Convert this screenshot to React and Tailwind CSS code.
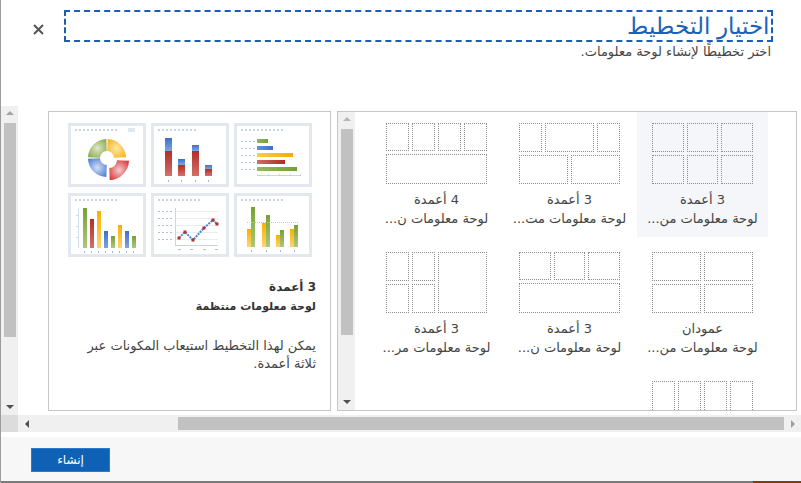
import React from 'react';

// dotted header line that sits on top of every chart thumbnail
const TitleDots = ({ count = 11 }) => (
  <g fill="#c9d5e4">
    {Array.from({ length: count }).map((_, i) => (
      <rect key={i} x={7 + i * 4} y={6} width={2} height={2} />
    ))}
  </g>
);

const Frame = ({ children }) => (
  <svg width="78" height="64" viewBox="0 0 78 64">
    <rect x="1.5" y="1.5" width="75" height="61" fill="#fff" stroke="#e3e8ee" strokeWidth="3" />
    {children}
  </svg>
);

const arc = (cx, cy, R, r, a0, a1) => {
  const p = (rad, a) => [cx + rad * Math.cos((a * Math.PI) / 180), cy + rad * Math.sin((a * Math.PI) / 180)];
  const [x0, y0] = p(R, a0);
  const [x1, y1] = p(R, a1);
  const [x2, y2] = p(r, a1);
  const [x3, y3] = p(r, a0);
  return `M${x0} ${y0} A${R} ${R} 0 0 1 ${x1} ${y1} L${x2} ${y2} A${r} ${r} 0 0 0 ${x3} ${y3} Z`;
};

const Donut = () => (
  <Frame>
    <TitleDots />
    <rect x="60" y="5" width="7" height="4" fill="#e1e7ee" />
    <path d={arc(39, 35, 19, 7, 182, 268)} fill="url(#dG)" />
    <path d={arc(39, 35, 19, 7, 272, 358)} fill="url(#dY)" />
    <path d={arc(39, 35, 19, 7, 92, 178)} fill="url(#dB)" />
    <path d={arc(41, 37, 20, 8, 2, 88)} fill="url(#dR)" />
  </Frame>
);

const Stacked = () => {
  const bars = [
    [14, 15, 28],
    [27, 36, 42],
    [41, 22, 28],
    [54, 42, 46],
  ];
  return (
    <Frame>
      <TitleDots count={10} />
      {bars.map(([x, b, r]) => (
        <g key={x}>
          <rect x={x} y={b} width="7" height={r - b} fill="url(#vB)" />
          <rect x={x} y={r} width="7" height={53 - r} fill="url(#vR)" />
          <rect x={x + 3} y="57" width="1" height="2" fill="#9fb8dc" />
        </g>
      ))}
    </Frame>
  );
};

const HBars = () => {
  const rows = [
    [18, 34, 'url(#hG)'],
    [25, 39, 'url(#hB)'],
    [32, 59, 'url(#hY)'],
    [39, 51, 'url(#hR)'],
    [46, 63, 'url(#hG)'],
  ];
  return (
    <Frame>
      <TitleDots />
      {rows.map(([y, end, fill]) => (
        <g key={y}>
          {[7, 11, 15, 19].map((x) => (
            <rect key={x} x={x} y={y} width="2" height="1" fill="#afc1d8" />
          ))}
          <rect x="23" y={y - 2} width={end - 23} height="4" fill={fill} />
        </g>
      ))}
      <rect x="23" y="52" width="44" height="1" fill="#c7d4e4" />
      {[23, 34, 45, 56, 66].map((x) => (
        <rect key={x} x={x} y="51" width="1" height="2" fill="#c7d4e4" />
      ))}
    </Frame>
  );
};

const VBars = () => {
  const bars = [
    [15, 15, 'url(#vG)'],
    [22, 26, 'url(#vR)'],
    [29, 18, 'url(#vY)'],
    [36, 38, 'url(#vB)'],
    [43, 43, 'url(#vG)'],
    [50, 32, 'url(#vY)'],
    [57, 38, 'url(#vB)'],
    [64, 43, 'url(#vG)'],
  ];
  return (
    <Frame>
      <TitleDots />
      <rect x="10" y="15" width="1" height="40" fill="#d3dde9" />
      {[22, 33, 44].map((y) => (
        <rect key={y} x="8" y={y} width="2" height="1" fill="#d3dde9" />
      ))}
      {bars.map(([x, top, fill]) => (
        <g key={x}>
          <rect x={x} y={top} width="4" height={55 - top} fill={fill} />
          <rect x={x + 1} y="58" width="1" height="2" fill="#9fb8dc" />
        </g>
      ))}
    </Frame>
  );
};

const Line = () => {
  const pts = [
    [28, 45],
    [34, 39],
    [42, 47],
    [53, 35],
    [62, 27],
    [66, 31],
  ];
  return (
    <Frame>
      <TitleDots />
      {[18, 25, 32, 39, 46].map((y) => (
        <g key={y}>
          {[7, 11, 15, 19].map((x) => (
            <rect key={x} x={x} y={y} width="2" height="1" fill="#afc1d8" />
          ))}
          <rect x="25" y={y} width="42" height="1" fill="#e8edf3" />
        </g>
      ))}
      <rect x="24" y="15" width="1" height="38" fill="#c9d5e4" />
      <rect x="24" y="52" width="43" height="1" fill="#c9d5e4" />
      {[27, 39, 52, 64].map((x) => (
        <rect key={x} x={x} y="56" width="3" height="1" fill="#afc1d8" />
      ))}
      <polyline
        points={pts.map((p) => p.join(',')).join(' ')}
        fill="none"
        stroke="#4a7fd0"
        strokeWidth="2"
        strokeDasharray="2 1"
      />
      {pts.map(([x, y]) => (
        <rect key={x} x={x - 1.5} y={y - 1.5} width="3" height="3" fill="#b8302b" />
      ))}
    </Frame>
  );
};

const Grouped = () => {
  const pairs = [
    [13, 36, 14],
    [28, 30, 22],
    [42, 42, 37],
    [56, 36, 32],
  ];
  return (
    <Frame>
      <TitleDots />
      {pairs.map(([x, y1, y2]) => (
        <g key={x}>
          <rect x={x} y={y1} width="4" height={54 - y1} fill="url(#vY)" />
          <rect x={x + 4} y={y2} width="4" height={54 - y2} fill="url(#vG)" />
          <rect x={x + 4} y="57" width="1" height="2" fill="#9fb8dc" />
        </g>
      ))}
      <line x1="13" y1="29.5" x2="64" y2="29.5" stroke="#c4c9d0" strokeDasharray="1 1" />
    </Frame>
  );
};

const Gradients = () => (
  <svg width="0" height="0" className="absolute">
    <defs>
      <linearGradient id="vG" x1="0" y1="0" x2="0" y2="1">
        <stop offset="0" stopColor="#76a134" />
        <stop offset="1" stopColor="#acc87e" />
      </linearGradient>
      <linearGradient id="vR" x1="0" y1="0" x2="0" y2="1">
        <stop offset="0" stopColor="#b22d27" />
        <stop offset="1" stopColor="#d3706b" />
      </linearGradient>
      <linearGradient id="vY" x1="0" y1="0" x2="0" y2="1">
        <stop offset="0" stopColor="#fbae00" />
        <stop offset="1" stopColor="#fdd56e" />
      </linearGradient>
      <linearGradient id="vB" x1="0" y1="0" x2="0" y2="1">
        <stop offset="0" stopColor="#3b70cc" />
        <stop offset="1" stopColor="#7fa4e0" />
      </linearGradient>
      <linearGradient id="hG" x1="0" y1="0" x2="1" y2="0">
        <stop offset="0" stopColor="#95b662" />
        <stop offset="1" stopColor="#74a032" />
      </linearGradient>
      <linearGradient id="hB" x1="0" y1="0" x2="1" y2="0">
        <stop offset="0" stopColor="#6590da" />
        <stop offset="1" stopColor="#3a6fcb" />
      </linearGradient>
      <linearGradient id="hY" x1="0" y1="0" x2="1" y2="0">
        <stop offset="0" stopColor="#fcca50" />
        <stop offset="1" stopColor="#f9aa00" />
      </linearGradient>
      <linearGradient id="hR" x1="0" y1="0" x2="1" y2="0">
        <stop offset="0" stopColor="#d06c68" />
        <stop offset="1" stopColor="#ae2a25" />
      </linearGradient>
      <radialGradient id="dG" cx="0.5" cy="0.5" r="0.7">
        <stop offset="0" stopColor="#dfe8cc" />
        <stop offset="1" stopColor="#7fa23c" />
      </radialGradient>
      <radialGradient id="dY" cx="0.5" cy="0.5" r="0.7">
        <stop offset="0" stopColor="#fde7a8" />
        <stop offset="1" stopColor="#f7ae0c" />
      </radialGradient>
      <radialGradient id="dB" cx="0.5" cy="0.5" r="0.7">
        <stop offset="0" stopColor="#d3e0f5" />
        <stop offset="1" stopColor="#3d73cc" />
      </radialGradient>
      <radialGradient id="dR" cx="0.5" cy="0.5" r="0.7">
        <stop offset="0" stopColor="#f6cccc" />
        <stop offset="1" stopColor="#d4262b" />
      </radialGradient>
    </defs>
  </svg>
);

// scrollbar arrow glyphs
const Arrow = ({ dir, color }) => {
  const pts = {
    up: '0,4 4,0 8,4',
    down: '0,0 8,0 4,4',
    left: '4,0 4,8 0,4',
    right: '0,0 4,4 0,8',
  }[dir];
  const vert = dir === 'up' || dir === 'down';
  return (
    <svg width={vert ? 8 : 4} height={vert ? 4 : 8} viewBox={vert ? '0 0 8 4' : '0 0 4 8'}>
      <polygon points={pts} fill={color} />
    </svg>
  );
};

const Box = ({ className = '' }) => <div className={`border border-dotted border-[#8c8c8c] ${className}`} />;

const layouts = [
  {
    title: '3 أعمدة',
    sub: 'لوحة معلومات من...',
    selected: true,
    thumb: (
      <div className="grid grid-cols-3 grid-rows-2 gap-[3px] w-[101px] h-[61px]">
        <Box /><Box /><Box /><Box /><Box /><Box />
      </div>
    ),
  },
  {
    title: '3 أعمدة',
    sub: 'لوحة معلومات مت...',
    thumb: (
      <div className="flex flex-col gap-[3px] w-[101px] h-[61px]">
        <div className="flex flex-1 gap-[3px]">
          <Box className="w-[23px]" /><Box className="flex-1" /><Box className="w-[23px]" />
        </div>
        <div className="flex flex-1 gap-[3px]">
          <Box className="flex-1" /><Box className="flex-1" />
        </div>
      </div>
    ),
  },
  {
    title: '4 أعمدة',
    sub: 'لوحة معلومات ن...',
    thumb: (
      <div className="flex flex-col gap-[3px] w-[101px] h-[61px]">
        <div className="grid grid-cols-4 flex-1 gap-[3px]">
          <Box /><Box /><Box /><Box />
        </div>
        <Box className="flex-1" />
      </div>
    ),
  },
  {
    title: 'عمودان',
    sub: 'لوحة معلومات من...',
    thumb: (
      <div className="grid grid-cols-2 grid-rows-2 gap-[3px] w-[101px] h-[61px]">
        <Box /><Box /><Box /><Box />
      </div>
    ),
  },
  {
    title: '3 أعمدة',
    sub: 'لوحة معلومات ن...',
    thumb: (
      <div className="flex flex-col gap-[3px] w-[101px] h-[61px]">
        <div className="grid grid-cols-3 flex-1 gap-[3px]">
          <Box /><Box /><Box />
        </div>
        <Box className="flex-1" />
      </div>
    ),
  },
  {
    title: '3 أعمدة',
    sub: 'لوحة معلومات مر...',
    thumb: (
      <div dir="ltr" className="flex gap-[3px] w-[101px] h-[61px]">
        <div className="grid grid-cols-2 grid-rows-2 gap-[3px] w-[49px]">
          <Box /><Box /><Box /><Box />
        </div>
        <Box className="flex-1" />
      </div>
    ),
  },
  {
    // only the top of this one is visible, its labels sit below the fold
    thumb: (
      <div className="grid grid-cols-4 gap-[3px] w-[101px] h-[61px]">
        <Box /><Box /><Box /><Box />
      </div>
    ),
  },
];

const VScroll = ({ thumbTop, thumbHeight, upColor = '#a3a3a3', downColor = '#505050' }) => (
  <div className="w-[17px] h-full bg-[#f0f0f0] flex flex-col items-center shrink-0">
    <div className="h-[14px] flex items-center justify-center">
      <Arrow dir="up" color={upColor} />
    </div>
    <div className={`w-[12px] bg-[#c1c1c1] ${thumbTop} ${thumbHeight}`} />
    <div className="flex-1" />
    <div className="h-[16px] flex items-center justify-center">
      <Arrow dir="down" color={downColor} />
    </div>
  </div>
);

const App = () => {
  return (
    <div
      dir="ltr"
      className="w-[801px] h-[483px] bg-white border-l border-[#9c9c9c] flex flex-col overflow-hidden font-['DejaVu_Sans',sans-serif] text-[#444]"
    >
      <Gradients />

      {/* header */}
      <div className="h-[106px] flex items-start pl-[32px] pt-[10px] shrink-0">
        <button className="mt-[14px] w-[11px] h-[11px] text-[#555]">
          <svg width="11" height="11" viewBox="0 0 11 11">
            <path d="M1 1 L10 10 M10 1 L1 10" stroke="#555" strokeWidth="2" />
          </svg>
        </button>
        <div className="ml-[20px] w-[709px] flex flex-col" dir="rtl">
          <div className="h-[32px] border-2 border-dashed border-[#1a5fb4] flex items-center pr-[2px]">
            <h1 className="text-[23px] leading-[28px] text-[#1b63b8] font-light">اختيار التخطيط</h1>
          </div>
          <p className="text-[13px] leading-[16px] text-[#444] pr-[2px] mt-[2px]">اختر تخطيطًا لإنشاء لوحة معلومات.</p>
        </div>
      </div>

      {/* body */}
      <div className="h-[309px] flex shrink-0">
        <VScroll thumbTop="mt-[3px]" thumbHeight="h-[214px]" />
        <div className="flex items-start gap-[6px] pt-[5px] pl-[30px]">
          {/* preview */}
          <div className="w-[283px] h-[300px] border border-[#c6c6c6] flex flex-col">
            <div className="grid grid-cols-[78px_78px_78px] gap-x-[5px] gap-y-[6px] pt-[11px] pl-[19px]">
              <Donut />
              <Stacked />
              <HBars />
              <VBars />
              <Line />
              <Grouped />
            </div>
            <div dir="rtl" className="pr-[14px] pt-[21px] text-[#333]">
              <div className="text-[12px] leading-[19px] font-bold">3 أعمدة</div>
              <div className="text-[11px] leading-[19px] font-bold">لوحة معلومات منتظمة</div>
              <div className="text-[13px] leading-[18px] text-[#444] mt-[21px] pl-[20px]">
                <div className="whitespace-nowrap">يمكن لهذا التخطيط استيعاب المكونات عبر</div>
                <div>ثلاثة أعمدة.</div>
              </div>
            </div>
          </div>

          {/* layout choices */}
          <div className="w-[460px] h-[300px] border border-[#c6c6c6] flex overflow-hidden">
            <VScroll thumbTop="mt-[3px]" thumbHeight="h-[206px]" upColor="#b5b5b5" />
            <div dir="rtl" className="flex-1 overflow-hidden pr-[28px]">
              <div className="grid grid-cols-[131px_131px_131px] gap-x-[2px] gap-y-[4px]">
                {layouts.map((l, i) => (
                  <div
                    key={i}
                    className={`h-[125px] flex flex-col items-center pt-[11px] ${l.selected ? 'bg-[#f4f6f9]' : ''}`}
                  >
                    {l.thumb}
                    {l.title && (
                      <>
                        <div className="mt-[6px] text-[13px] leading-[19px] text-[#444] text-center whitespace-nowrap">{l.title}</div>
                        <div className="text-[13px] leading-[19px] text-[#444] text-center whitespace-nowrap">{l.sub}</div>
                      </>
                    )}
                  </div>
                ))}
              </div>
            </div>
          </div>
        </div>
      </div>

      {/* horizontal scrollbar */}
      <div className="h-[17px] flex shrink-0">
        <div className="w-[17px] bg-[#dcdcdc]" />
        <div className="flex-1 bg-[#f0f0f0] flex items-center">
          <div className="w-[17px] flex justify-center">
            <Arrow dir="left" color="#505050" />
          </div>
          <div className="ml-[143px] w-[606px] h-[13px] bg-[#c1c1c1]" />
          <div className="flex-1 flex justify-center">
            <Arrow dir="right" color="#a0a0a0" />
          </div>
        </div>
      </div>

      <div className="h-[5px] shrink-0" />

      {/* footer */}
      <div className="flex-1 bg-[#f7f7f7] pl-[30px] pt-[10px]">
        <button className="w-[79px] h-[24px] bg-[#0f61b6] border border-[#2a7ad2] text-white text-[12px] leading-[20px]">
          إنشاء
        </button>
      </div>
      <div className="h-[2px] flex shrink-0">
        <div className="w-[752px] bg-[#7b7b7b]" />
        <div className="flex-1 bg-[#7a3d14]" />
      </div>
    </div>
  );
};

export default App;
